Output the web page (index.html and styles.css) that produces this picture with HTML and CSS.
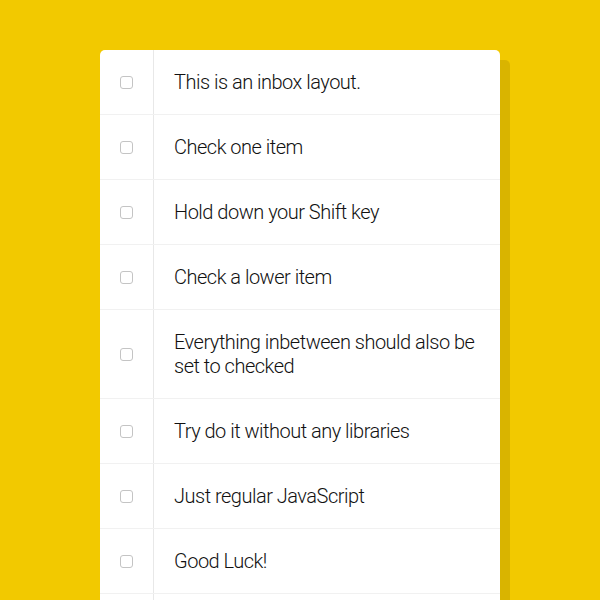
FILE: index.html
```html
<!DOCTYPE html>
<html>
<head>
<meta charset="utf-8">
<link rel="stylesheet" href="styles.css">
</head>
<body>
<div class="inbox">
  <div class="item"><input type="checkbox"><p>This is an inbox layout.</p></div>
  <div class="item"><input type="checkbox"><p>Check one item</p></div>
  <div class="item"><input type="checkbox"><p>Hold down your Shift key</p></div>
  <div class="item"><input type="checkbox"><p>Check a lower item</p></div>
  <div class="item"><input type="checkbox"><p>Everything inbetween should also be set to checked</p></div>
  <div class="item"><input type="checkbox"><p>Try do it without any libraries</p></div>
  <div class="item"><input type="checkbox"><p>Just regular JavaScript</p></div>
  <div class="item"><input type="checkbox"><p>Good Luck!</p></div>
  <div class="item"><input type="checkbox"><p>Don't forget to tweet your result!</p></div>
</div>
</body>
</html>
```

FILE: styles.css
```css
html {
  font-family: Roboto, "Liberation Sans", Arial, sans-serif;
  background: #f2c900;
}
body {
  margin: 0;
  padding: 50px 0;
}
.inbox {
  max-width: 400px;
  margin: 0 auto;
  background: #fff;
  border-radius: 5px;
  box-shadow: 10px 10px 0 rgba(0, 0, 0, 0.1);
}
.item {
  display: flex;
  align-items: center;
  border-bottom: 1px solid #f1f1f1;
}
.item:last-child {
  border-bottom: 0;
}
.item input[type="checkbox"] {
  -webkit-appearance: none;
  appearance: none;
  margin: 20px;
  width: 13px;
  height: 13px;
  box-sizing: border-box;
  border: 1px solid #c4c4c4;
  border-radius: 3px;
  background: #fff;
  flex: none;
}
.item p {
  margin: 0;
  padding: 20px;
  flex: 1;
  font-size: 20px;
  line-height: 24px;
  font-weight: 300;
  letter-spacing: -0.5px;
  color: #111;
  border-left: 1px solid #e8e8e8;
}
```
